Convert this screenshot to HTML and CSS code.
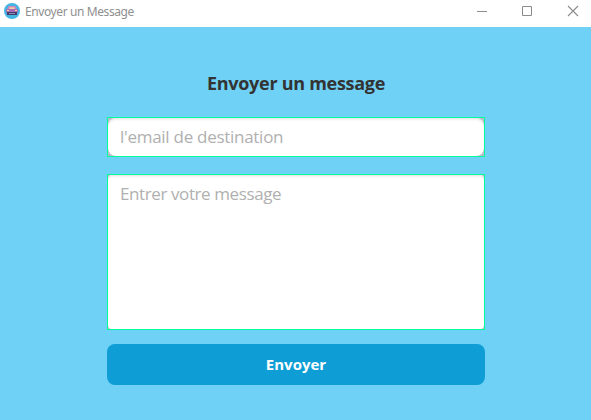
FILE: index.html
```html
<!DOCTYPE html>
<html lang="fr">
<head>
<meta charset="utf-8">
<title>Envoyer un Message</title>
<link rel="stylesheet" href="styles.css">
</head>
<body>
<header class="titlebar">
  <svg class="logo" viewBox="0 0 16 16" width="16" height="16">
    <circle cx="8" cy="8" r="8" fill="#42b5e2"/>
    <path d="M3 6.500 4.500 3h7L13 6.500z" fill="#c987bd"/>
    <path d="M5 6 6 4.200h4L11 6z" fill="#f3cba4"/>
    <rect x="2" y="6" width="12" height="3.500" rx="1" fill="#a76bb8"/>
    <path d="M3 7.500h2M11 7.500h2" stroke="#ffd28a"/>
    <rect x="3" y="9" width="10" height="3" fill="#493b69"/>
    <path d="M5 10.500h6" stroke="#8291b4"/>
  </svg>
  <span class="caption">Envoyer un Message</span>
  <svg class="controls" viewBox="0 0 104 12" width="104" height="12" fill="none" stroke="#8c8c8c">
    <path d="M0 6.500h10M45.500 1.500h9v9h-9z"/>
    <path d="m91 1 10 10M101 1 91 11" stroke-width="1.100"/>
  </svg>
</header>
<main class="content">
  <h1 class="heading">Envoyer un message</h1>
  <div class="field"><input class="control" type="text" placeholder="l'email de destination"></div>
  <div class="field field-message"><textarea class="control" placeholder="Entrer votre message"></textarea></div>
  <button class="send" type="button">Envoyer</button>
</main>
</body>
</html>
```
FILE: styles.css
```css
* {
  box-sizing: border-box;
}

body {
  margin: 0;
  height: 420px;
  display: flex;
  flex-direction: column;
  overflow: hidden;
  background: #70d1f6;
  font-family: "Noto Sans", "Open Sans", sans-serif;
}

.titlebar {
  display: flex;
  height: 27px;
  padding: 3px 10px 0 4px;
  background: #fff;
}

.logo {
  flex: none;
}

.caption {
  margin-left: 5px;
  color: #8f8f8f;
  font-size: 12px;
  line-height: 17px;
  letter-spacing: -0.4px;
  white-space: nowrap;
}

.controls {
  margin: 2px 0 0 auto;
}

.content {
  display: flex;
  flex-direction: column;
  width: 378px;
  margin-left: 107px;
  padding-top: 43px;
}

.heading {
  margin: 0 0 20px;
  height: 27px;
  color: #333;
  font-family: "Open Sans", "Noto Sans", sans-serif;
  font-size: 18px;
  font-weight: 700;
  line-height: 27px;
  letter-spacing: -0.28px;
  text-align: center;
}

.field {
  height: 40px;
  margin-bottom: 17px;
  border: 1px solid #00ff9c;
  background: #b9bdc9;
}

.field-message {
  height: 156px;
  margin-bottom: 14px;
}

.control {
  display: block;
  width: 100%;
  height: 100%;
  padding: 0 12px 2px;
  border: 0;
  border-radius: 8px;
  outline: 0;
  resize: none;
  background: #fff;
  box-shadow: inset 0 2px 3px -1px #ddd;
  color: #333;
  font: 17px/24px "Open Sans", "Noto Sans", sans-serif;
  letter-spacing: -0.28px;
}

.field-message .control {
  padding-top: 7px;
  border-radius: 4px;
  letter-spacing: -0.4px;
}

.control::placeholder {
  color: #b0b0b0;
  opacity: 1;
}

.send {
  height: 41px;
  padding: 0;
  border: 0;
  border-radius: 8px;
  background: #0e9dd5;
  color: #fff;
  font: 700 15px/41px "Open Sans", "Noto Sans", sans-serif;
  letter-spacing: 0;
}
```
